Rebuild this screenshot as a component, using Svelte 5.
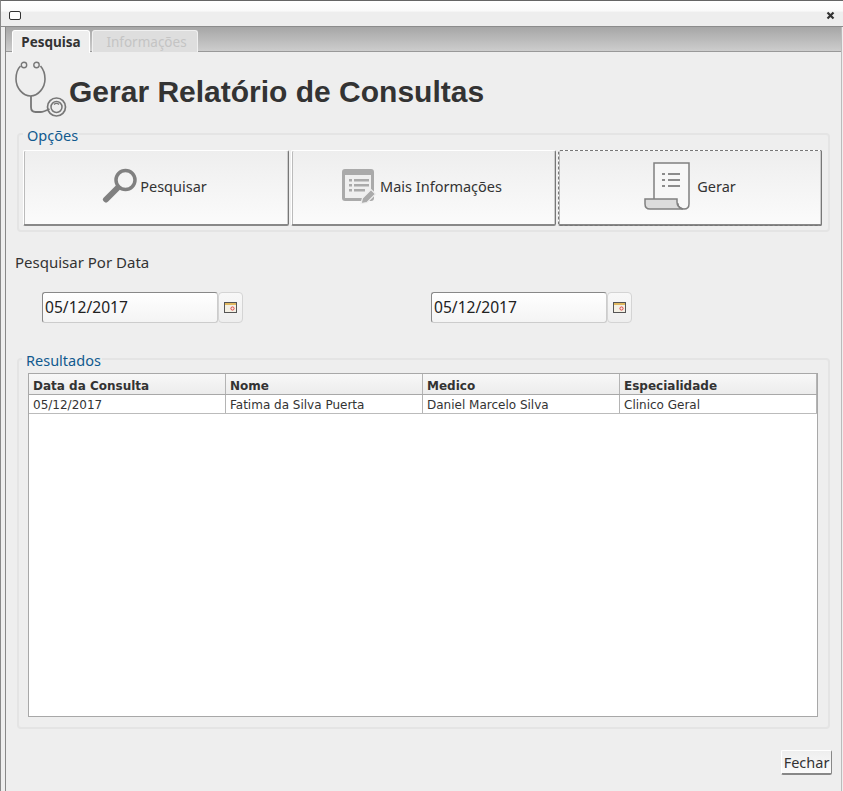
<script>
  let colunas = ['Data da Consulta', 'Nome', 'Medico', 'Especialidade'];
  let consultas = [['05/12/2017', 'Fatima da Silva Puerta', 'Daniel Marcelo Silva', 'Clinico Geral']];
</script>

<div class="janela">
  <div class="titulo">
    <span class="win-icon"></span>
    <svg class="fechar-x" width="9" height="9" viewBox="0 0 9 9"><path d="M1.500 1.500l6 6M7.500 1.500l-6 6" stroke="#333" stroke-width="2.200"/></svg>
  </div>
  <div class="corpo">
    <div class="abas">
      <div class="aba ativa">Pesquisa</div>
      <div class="aba">Informações</div>
    </div>
    <div class="conteudo">
      <div class="cabecalho">
        <svg width="52" height="58" viewBox="0 0 52 58" fill="none" stroke="#777">
          <path d="M5.500 6C1.500 10 1 14 1 19c0 9 7 17 14.500 17S30 28 30 19c0-5-1-9-4.500-13" stroke-width="1.600"/>
          <circle cx="9" cy="5" r="2.700" stroke-width="1.400"/>
          <circle cx="21.500" cy="5" r="2.700" stroke-width="1.400"/>
          <path d="M16 36v11c0 3 1.500 5 4.500 5h5c3 0 5-1 9-3" stroke-width="1.800"/>
          <circle cx="41.500" cy="47" r="9" stroke-width="1.700"/>
          <circle cx="41.500" cy="47" r="5.500" stroke-width="1.500"/>
          <path d="M39 44.500a3.500 3.500 0 0 1 5 0" stroke-width="1.200"/>
        </svg>
        <h1>Gerar Relatório de Consultas</h1>
      </div>

      <fieldset class="opcoes">
        <legend>Opções</legend>
        <div class="botoes">
          <button class="acao">
            <svg width="36" height="36" viewBox="0 0 36 36">
              <circle cx="23.500" cy="12" r="9.500" fill="none" stroke="#808080" stroke-width="3.500"/>
              <path d="M15.500 20L4 31.500" stroke="#808080" stroke-width="6" stroke-linecap="round"/>
            </svg>
            <span>Pesquisar</span>
          </button>
          <button class="acao">
            <svg width="36" height="36" viewBox="0 0 36 36">
              <rect x="0" y="1" width="32" height="32" rx="3" fill="#aaa"/>
              <rect x="3" y="7" width="26" height="23" fill="#efefef"/>
              <g fill="#aaa">
                <rect x="7" y="11" width="3" height="2.500"/><rect x="12" y="11" width="15" height="2.500"/>
                <rect x="7" y="16" width="3" height="2.500"/><rect x="12" y="16" width="15" height="2.500"/>
                <rect x="7" y="21" width="3" height="2.500"/><rect x="12" y="21" width="11" height="2.500"/>
              </g>
              <path d="M19 35.500l1.500-5.500L29 21.500l4.500 4.500L25 34.500z" fill="#aaa" stroke="#efefef" stroke-width="1.200"/>
            </svg>
            <span>Mais Informações</span>
          </button>
          <button class="acao foco">
            <svg width="50" height="50" viewBox="0 0 50 50">
              <path d="M11 2h35v41c0 3-2 5-5 5s-6-2-6-5H11z" fill="#f7f7f7" stroke="#808080" stroke-width="1.500"/>
              <path d="M2 38h32v3c0 3 2 6 6 7H7c-3 0-5-2-5-5z" fill="#dcdcdc" stroke="#808080" stroke-width="1.500"/>
              <g fill="#8c8c8c">
                <rect x="19" y="12" width="3" height="2"/><rect x="25" y="12" width="12" height="2"/>
                <rect x="19" y="18" width="3" height="2"/><rect x="25" y="18" width="12" height="2"/>
                <rect x="19" y="24" width="3" height="2"/><rect x="25" y="24" width="12" height="2"/>
              </g>
            </svg>
            <span>Gerar</span>
          </button>
        </div>
      </fieldset>

      <div class="rotulo">Pesquisar Por Data</div>
      <div class="datas">
        {#each [0, 1] as d}
          <div class="data">
            <input type="text" value="05/12/2017" />
            <button class="cal" aria-label="calendario">
              <svg width="13" height="11" viewBox="0 0 13 11">
                <rect x=".5" y=".5" width="12" height="10" fill="#f4f0e4" stroke="#555"/>
                <rect x="1" y="1" width="11" height="2" fill="#e0b860"/>
                <circle cx="8.500" cy="6.500" r="1.600" fill="none" stroke="#e04040"/>
              </svg>
            </button>
          </div>
        {/each}
      </div>

      <fieldset class="resultados">
        <legend>Resultados</legend>
        <div class="tabela">
          <div class="linha head">
            {#each colunas as c}<div class="cel">{c}</div>{/each}
          </div>
          {#each consultas as row}
            <div class="linha">
              {#each row as v}<div class="cel">{v}</div>{/each}
            </div>
          {/each}
        </div>
      </fieldset>

      <div class="rodape">
        <button class="fechar">Fechar</button>
      </div>
    </div>
  </div>
</div>

<style>
  :global(body) {
    margin: 0;
    background: #eee;
  }
  .janela {
    height: 791px;
    box-sizing: border-box;
    border-top: 1px solid #666;
    border-left: 1px solid #888;
    overflow: hidden;
    font-family: "Noto Sans", sans-serif;
    color: #333;
    background: #eee;
  }
  .titulo {
    height: 26px;
    box-sizing: border-box;
    display: flex;
    justify-content: space-between;
    align-items: center;
    padding: 4px 8px 0 8px;
    background: linear-gradient(#fff, #fafafa 40%, #eee 45%);
    border-bottom: 1px solid #8c8c8c;
  }
  .win-icon {
    width: 10px;
    height: 7px;
    border: 1px solid #333;
    border-radius: 2px;
    background: #fff;
  }
  .corpo {
    margin-left: 4px;
    margin-right: 1px;
    border-left: 1px solid #888;
    border-right: 1px solid #bbb;
    height: 764px;
  }
  .abas {
    height: 25px;
    box-sizing: border-box;
    display: flex;
    gap: 2px;
    padding: 3px 0 0 6px;
    background: linear-gradient(#a6a6a6, #cdcdcd);
    border-bottom: 1px solid #999;
  }
  .aba {
    width: 106px;
    height: 22px;
    box-sizing: border-box;
    text-align: center;
    padding: 3px 0 0 3px;
    font-size: 13.500px;
    line-height: 17px;
    color: #c4c4c4;
    background: #dedede;
    border: 1px solid #f0f0f0;
    border-bottom: 0;
    border-radius: 3px 3px 0 0;
  }
  .aba.ativa {
    width: 78px;
    height: 23px;
    padding-left: 0;
    font-weight: 700;
    color: #333;
    background: #eee;
    position: relative;
    border-color: #fff;
  }
  .conteudo {
    padding: 8px 11px 0 9px;
  }
  .cabecalho {
    display: flex;
    align-items: flex-end;
    gap: 2px;
    height: 58px;
    margin-bottom: 5px;
  }
  h1 {
    margin: 0 0 8px;
    font-family: "Liberation Sans", sans-serif;
    font-size: 30px;
    font-weight: 700;
    line-height: 36px;
    color: #333;
  }
  fieldset {
    margin: 0 0 0 2px;
    border: 2px solid #e4e4e4;
    border-radius: 4px;
    min-width: 0;
  }
  legend {
    padding: 4px 1px 0 4px;
    font-size: 14.500px;
    line-height: 17px;
    color: #115a8f;
  }
  .opcoes {
    padding: 6px 4px 4px;
    height: 109px;
    box-sizing: border-box;
  }
  .botoes {
    display: grid;
    grid-template-columns: 266px 265px 264px;
    gap: 2px;
    height: 76px;
  }
  .acao {
    display: flex;
    align-items: center;
    justify-content: center;
    gap: 2px;
    padding: 0 3px 3px 0;
    font-family: inherit;
    font-size: 14.500px;
    color: #333;
    background: linear-gradient(#eee, #fbfbfb);
    border: 1px solid #fff;
    border-right: 1px solid #777;
    border-bottom: 2px solid #888;
    border-radius: 2px;
    box-shadow: inset 1px 0 0 #bbb, inset -1px 0 0 #ccc;
  }
  .foco {
    outline: 1px dashed #777;
    outline-offset: -1px;
    gap: 4px;
    padding-right: 1px;
  }
  .rotulo {
    margin: 20px 0 0;
    font-size: 15px;
    line-height: 20px;
  }
  .datas {
    display: grid;
    grid-template-columns: 389px 220px;
    padding-left: 27px;
    margin: 20px 0 25px;
  }
  .data {
    display: flex;
  }
  .data input {
    width: 176px;
    height: 31px;
    box-sizing: border-box;
    padding: 0 2px 2px;
    font-family: inherit;
    font-size: 15.600px;
    color: #222;
    background: linear-gradient(#fff, #f4f4f4);
    border: 1px solid #ccc;
    border-top-color: #888;
    border-left-color: #888;
    border-radius: 3px;
    outline: none;
  }
  .cal {
    width: 25px;
    height: 31px;
    display: flex;
    align-items: center;
    justify-content: center;
    padding: 0;
    background: linear-gradient(#f8f8f8, #eee);
    border: 1px solid #d4d4d4;
    border-radius: 4px;
  }
  .resultados {
    height: 381px;
    box-sizing: border-box;
    padding: 4px 10px 10px 9px;
  }
  .resultados legend {
    margin-left: -6px;
  }
  .tabela {
    height: 344px;
    box-sizing: border-box;
    background: #fff;
    border: 1px solid #a8a8a8;
    font-family: "DejaVu Sans", sans-serif;
    font-size: 12px;
  }
  .linha {
    display: grid;
    grid-template-columns: repeat(4, 197px);
    grid-template-rows: 18px;
    box-sizing: border-box;
    height: 19px;
    line-height: 19px;
    border-bottom: 1px solid #bbb;
  }
  .linha.head {
    grid-template-rows: 20px;
    height: 21px;
    line-height: 22px;
    font-weight: 700;
    background: linear-gradient(#f8f8f8, #ececec);
    border-bottom: 1px solid #a8a8a8;
  }
  .cel {
    padding: 1px 0 0 4px;
    border-right: 1px solid #b4b4b4;
    white-space: nowrap;
    overflow: hidden;
  }
  .rodape {
    display: flex;
    justify-content: flex-end;
    margin: 21px -2px 0 0;
  }
  .fechar {
    width: 51px;
    height: 25px;
    padding: 0;
    font-family: inherit;
    font-size: 14.500px;
    color: #333;
    background: linear-gradient(#eee, #fbfbfb);
    border: 1px solid #fff;
    border-right: 1px solid #888;
    border-bottom: 2px solid #888;
    border-radius: 2px;
  }
</style>
